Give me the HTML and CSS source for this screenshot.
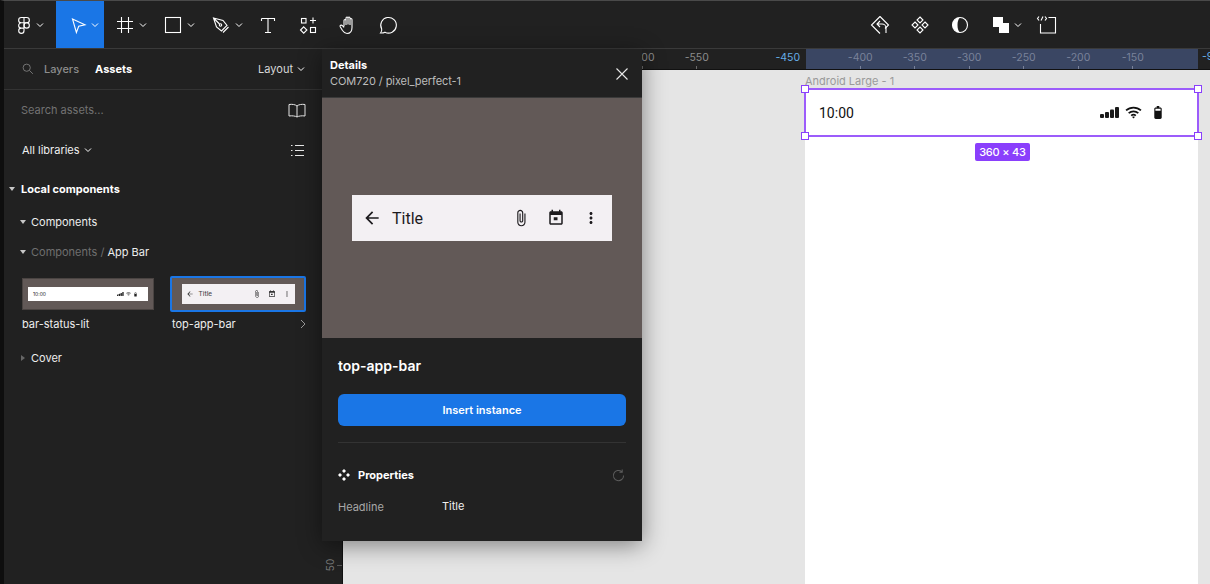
FILE: index.html
```html
<!DOCTYPE html>
<html lang="en">
<head>
<meta charset="utf-8">
<title>Figma assets</title>
<link rel="stylesheet" href="styles.css">
</head>
<body>
<svg class="defs" width="0" height="0" aria-hidden="true">
  <symbol id="i-back" viewBox="0 0 24 24"><path d="M20 11H7.83l5.59-5.59L12 4l-8 8 8 8 1.41-1.41L7.83 13H20v-2z"/></symbol>
  <symbol id="i-clip" viewBox="0 0 24 24"><path d="M16.5 6v11.5c0 2.21-1.79 4-4 4s-4-1.79-4-4V5c0-1.38 1.12-2.5 2.5-2.5s2.5 1.12 2.5 2.5v10.5c0 .55-.45 1-1 1s-1-.45-1-1V6H10v9.5c0 1.38 1.12 2.5 2.5 2.5s2.5-1.12 2.5-2.5V5c0-2.21-1.79-4-4-4S7 2.79 7 5v12.5c0 3.04 2.46 5.5 5.5 5.5s5.5-2.46 5.5-5.5V6h-1.5z"/></symbol>
  <symbol id="i-cal" viewBox="0 0 24 24"><path d="M19 3h-1V1h-2v2H8V1H6v2H5c-1.11 0-2 .9-2 2v14c0 1.1.89 2 2 2h14c1.1 0 2-.9 2-2V5c0-1.100-.9-2-2-2zm0 16H5V8h14v11zM9 11h5v4H9z"/></symbol>
  <symbol id="i-more" viewBox="0 0 24 24"><path d="M12 8c1.1 0 2-.9 2-2s-.9-2-2-2-2 .9-2 2 .9 2 2 2zm0 2c-1.1 0-2 .9-2 2s.9 2 2 2 2-.9 2-2-.9-2-2-2zm0 6c-1.1 0-2 .9-2 2s.9 2 2 2 2-.9 2-2-.9-2-2-2z"/></symbol>
  <symbol id="i-signal" viewBox="0 0 20 11"><rect x="0" y="7" width="4" height="4" rx="1"/><rect x="5" y="5" width="4" height="6" rx="1"/><rect x="10" y="2.500" width="4" height="8.500" rx="1"/><rect x="15" y="0" width="4" height="11" rx="1"/></symbol>
  <symbol id="i-wifi" viewBox="0 0 18 14"><path class="wifi" d="M1 4.800C5.500 .6 12.500 .6 17 4.800M3.800 7.700c3-2.700 7.400-2.700 10.400 0M6.500 10.300c1.500-1.200 3.500-1.200 5 0"/><path d="M7.500 11.800 9 13.500l1.500-1.700c-.9-.7-2.100-.7-3 0z"/></symbol>
  <symbol id="i-batt" viewBox="0 0 10 14"><path d="M7.500 1.500H6.400V0H3.600v1.500H2.500C1.700 1.500 1 2.200 1 3v9.500c0 .8.700 1.500 1.500 1.500h5c.8 0 1.500-.7 1.500-1.500V3c0-.8-.7-1.500-1.500-1.500zM2.200 3h5.600v2H2.200z" fill-rule="evenodd"/></symbol>
  <symbol id="i-chev" viewBox="0 0 8 6"><path class="chev" d="M1 1.500 4 4.500 7 1.500"/></symbol>
</svg>

<div class="app">
  <header class="toolbar">
    <div class="tool tool-logo">
      <svg class="ic" viewBox="0 0 24 24"><path d="M12 4.500H9.300a2.650 2.650 0 0 0 0 5.300H12zM12 4.500h2.700a2.650 2.650 0 0 1 0 5.300H12zM12 9.800H9.300a2.650 2.650 0 0 0 0 5.300H12zM9.300 15.100A2.650 2.650 0 1 0 12 17.750v-2.650z"/><circle cx="14.700" cy="12.450" r="2.650"/></svg>
      <svg class="chev-ic"><use href="#i-chev"/></svg>
    </div>
    <div class="tool tool-chev tool-active">
      <svg class="ic" viewBox="0 0 24 24"><path d="M7.500 6 20 11.800l-6.300 1.500-2.300 6.200z"/></svg>
      <svg class="chev-ic"><use href="#i-chev"/></svg>
    </div>
    <div class="tool tool-chev">
      <svg class="ic" viewBox="0 0 24 24"><path d="M8.500 4v16M15.500 4v16M4 8.500h16M4 15.500h16"/></svg>
      <svg class="chev-ic"><use href="#i-chev"/></svg>
    </div>
    <div class="tool tool-chev">
      <svg class="ic" viewBox="0 0 24 24"><rect x="4.500" y="4.500" width="15" height="15"/></svg>
      <svg class="chev-ic"><use href="#i-chev"/></svg>
    </div>
    <div class="tool tool-chev">
      <svg class="ic" viewBox="0 0 24 24"><path d="M4.500 5 14 7.500l4 5-5.500 5.500-5-4zM4.500 5l6 6M14 19.500l5.500-5.500"/><circle cx="11.500" cy="12" r="1.200"/></svg>
      <svg class="chev-ic"><use href="#i-chev"/></svg>
    </div>
    <div class="tool">
      <svg class="ic" viewBox="0 0 24 24"><path d="M5.500 5.500h13v2.500M5.500 5.500V8M12 5.500v14M9 19.500h6"/></svg>
    </div>
    <div class="tool">
      <svg class="ic" viewBox="0 0 24 24"><rect x="5.500" y="5.500" width="4.500" height="4.500"/><path d="M17 4.500v6M14 7.500h6M7.700 13.800l3.200 3.200-3.200 3.200-3.200-3.200z"/><rect x="14.500" y="14.500" width="5" height="5"/></svg>
    </div>
    <div class="tool">
      <svg class="ic" viewBox="0 0 24 24"><path d="M8 13.500V7.500a1 1 0 0 1 2 0V12M10 11.500V5a1 1 0 0 1 2 0v6.500M12 11.500V5a1 1 0 0 1 2 0v7M14 11.500V6.500a1 1 0 0 1 2 0v8c0 3.700-2 6-5 6-2.500 0-3.500-1.500-4.500-3l-2.300-3.700c-.7-1.200 1-2.300 2-1.300L8 14.500"/></svg>
    </div>
    <div class="tool">
      <svg class="ic" viewBox="0 0 24 24"><path d="M4.500 20c1-1.200 1.400-2.500 1.200-4A7.800 7.800 0 1 1 9 19.200c-1.500.8-2.900 1-4.500.8z"/></svg>
    </div>
    <div class="toolbar-right">
      <div class="tool">
        <svg class="ic" viewBox="0 0 24 24"><path d="M12 3.500 20.500 12l-3.500 3.500M12 3.500 3.500 12l8.500 8.500"/><path d="M12 8l-3 3 3 3M9 11h5a4 4 0 0 1 4 4v5"/></svg>
      </div>
      <div class="tool">
        <svg class="ic" viewBox="0 0 24 24"><path d="M12 4l3 3-3 3-3-3zM7 9l3 3-3 3-3-3zM17 9l3 3-3 3-3-3zM12 14l3 3-3 3-3-3z"/></svg>
      </div>
      <div class="tool">
        <svg class="ic" viewBox="0 0 24 24"><circle cx="12" cy="12" r="7.500"/><path class="solid" d="M12 4.500a7.500 7.500 0 0 0 0 15c-2-2-2.500-4.500-2.500-7.500S10 6.500 12 4.500z"/></svg>
      </div>
      <div class="tool tool-bool">
        <svg class="ic solid" viewBox="0 0 24 24"><path d="M4 4h10v6h6v10H10v-6H4z"/></svg>
        <svg class="chev-ic"><use href="#i-chev"/></svg>
      </div>
      <div class="tool tool-code">
        <svg class="ic" viewBox="0 0 24 24"><path d="M13.500 4.500h7v15.500H5.500v-9M4 3.500 2.500 5.500 4 7.500M10 3.500l1.500 2-1.500 2M6 7.500l2-4"/></svg>
      </div>
    </div>
  </header>

  <main class="workspace">
    <aside class="sidebar">
      <div class="tabs">
        <svg class="ic-search" viewBox="0 0 14 14"><circle cx="5.500" cy="5.500" r="4.200"/><path d="m8.700 8.700 4 4"/></svg>
        <span class="tab">Layers</span>
        <span class="tab tab-on">Assets</span>
        <span class="tab-layout">Layout</span>
        <svg class="chev-ic chev-dim"><use href="#i-chev"/></svg>
      </div>
      <div class="search">
        <span class="search-text">Search assets...</span>
        <svg class="ic-book" viewBox="0 0 18 15"><path d="M9 3C7.500 1.500 4 1 1 1.500V13c3-.5 6.500 0 8 1 1.500-1 5-1.500 8-1V1.500C14 1 10.500 1.500 9 3zM9 3v11"/></svg>
      </div>
      <div class="libs">
        <span>All libraries</span>
        <svg class="chev-ic chev-dim"><use href="#i-chev"/></svg>
        <svg class="ic-list" viewBox="0 0 13 13"><path d="M0 1.500h1.500M4 1.500h9M0 6.500h1.500M4 6.500h9M0 11.500h1.500M4 11.500h9"/></svg>
      </div>
      <div class="row row-top"><i class="tri"></i><strong>Local components</strong></div>
      <div class="row row-sub"><i class="tri"></i><span>Components</span></div>
      <div class="row row-path"><i class="tri"></i><span class="dim">Components /</span><span>&nbsp;App Bar</span></div>
      <div class="thumbs">
        <figure class="thumb">
          <div class="thumb-box">
            <div class="mini mini-status">
              <span>10:00</span>
              <svg class="mini-sig"><use href="#i-signal"/></svg>
              <svg class="mini-wifi"><use href="#i-wifi"/></svg>
              <svg class="mini-bat"><use href="#i-batt"/></svg>
            </div>
          </div>
          <figcaption>bar-status-lit</figcaption>
        </figure>
        <figure class="thumb thumb-sel">
          <div class="thumb-box">
            <div class="mini mini-app">
              <svg class="mini-ic"><use href="#i-back"/></svg>
              <span class="mini-title">Title</span>
              <svg class="mini-ic"><use href="#i-clip"/></svg>
              <svg class="mini-ic"><use href="#i-cal"/></svg>
              <svg class="mini-ic"><use href="#i-more"/></svg>
            </div>
          </div>
          <figcaption>top-app-bar<svg class="cap-arrow" viewBox="0 0 6 10"><path d="M1 1l4 4-4 4"/></svg></figcaption>
        </figure>
      </div>
      <div class="row row-cover"><i class="tri tri-right"></i><span>Cover</span></div>
    </aside>

    <div class="vruler"><span class="vlabel">50</span><i class="vtick"></i></div>

    <section class="stage">
      <div class="ruler">
        <div class="rcell"><span>-600</span></div>
        <div class="rcell"><span>-550</span></div>
        <div class="rcell rcell-sel"><span>-450</span></div>
        <div class="rcell"><span>-400</span></div>
        <div class="rcell"><span>-350</span></div>
        <div class="rcell"><span>-300</span></div>
        <div class="rcell"><span>-250</span></div>
        <div class="rcell"><span>-200</span></div>
        <div class="rcell"><span>-150</span></div>
        <span class="rband"></span>
        <span class="rend">-90</span>
      </div>
      <div class="canvas">
        <div class="frame-name">Android Large - 1</div>
        <div class="frame">
          <div class="status">
            <span class="status-time">10:00</span>
            <svg class="st-sig"><use href="#i-signal"/></svg>
            <svg class="st-wifi"><use href="#i-wifi"/></svg>
            <svg class="st-bat"><use href="#i-batt"/></svg>
          </div>
          <div class="selection">
            <i class="h h-tl"></i><i class="h h-tr"></i><i class="h h-bl"></i><i class="h h-br"></i>
            <span class="size">360 × 43</span>
          </div>
        </div>
      </div>
    </section>

    <div class="details">
      <div class="d-head">
        <div>
          <div class="d-title">Details</div>
          <div class="d-path">COM720 / pixel_perfect-1</div>
        </div>
        <svg class="d-close" viewBox="0 0 12 12"><path d="M.5.500l11 11M11.500.500l-11 11"/></svg>
      </div>
      <div class="d-preview">
        <div class="appbar">
          <svg class="ab-ic ab-back"><use href="#i-back"/></svg>
          <span class="ab-title">Title</span>
          <svg class="ab-ic"><use href="#i-clip"/></svg>
          <svg class="ab-ic"><use href="#i-cal"/></svg>
          <svg class="ab-ic"><use href="#i-more"/></svg>
        </div>
      </div>
      <div class="d-body">
        <div class="d-name">top-app-bar</div>
        <button class="d-btn" type="button">Insert instance</button>
        <hr class="d-rule">
        <div class="d-props">
          <svg class="ic-props" viewBox="0 0 12 12"><path d="M6 0l2 2-2 2-2-2zM2 4l2 2-2 2-2-2zM10 4l2 2-2 2-2-2zM6 8l2 2-2 2-2-2z"/></svg>
          <strong>Properties</strong>
          <svg class="ic-reset" viewBox="0 0 14 14"><path d="M12.500 7A5.500 5.500 0 1 1 10.500 2.800M11 .500v3H8"/></svg>
        </div>
        <div class="d-field"><span class="d-key">Headline</span><span class="d-val">Title</span></div>
      </div>
    </div>
  </main>
</div>
</body>
</html>
```

FILE: styles.css
```css
* { box-sizing: border-box; }
html, body { margin: 0; height: 100%; overflow: hidden; }
body { font-family: Inter, "Liberation Sans", sans-serif; font-size: 11px; color: #fff; background: #e5e5e5; }
.defs { position: absolute; }
svg { display: block; flex: none; }

.app { width: 1210px; height: 584px; display: flex; flex-direction: column; overflow: hidden; background: #212121; border-top: 1px solid #4a4a4a; border-left: 4px solid #0e0e0e; }

/* Toolbar */
.toolbar { height: 48px; flex: none; display: flex; align-items: stretch; background: #212121; border-bottom: 1px solid #3a3a3a; }
.tool { width: 40px; display: flex; align-items: center; justify-content: center; }
.tool-logo { width: 52px; justify-content: flex-start; padding-left: 8px; gap: 0; }
.tool-chev { width: 48px; justify-content: flex-start; padding-left: 9px; gap: 2px; }
.tool-active { background: #1a76e6; }
.toolbar-right { display: flex; margin-left: 452px; }
.tool-bool { width: 50px; justify-content: flex-start; padding-left: 9px; gap: 1px; }
.tool-code { width: 34px; }
.ic { width: 24px; height: 24px; fill: none; stroke: #fff; stroke-width: 1.1; }
.ic .solid, .ic.solid { fill: #fff; stroke: none; }
.chev-ic { width: 8px; height: 6px; }
.chev { fill: none; stroke: #fff; stroke-width: 1; }
.chev-dim .chev { stroke: #8a8a8a; }

/* Workspace */
.workspace { flex: 1; min-height: 0; display: flex; position: relative; }

/* Sidebar */
.sidebar { width: 318px; flex: none; background: #212121; }
.tabs { height: 41px; display: flex; align-items: center; padding: 0 17px 1px 18px; border-bottom: 1px solid #333; }
.ic-search { width: 12px; height: 12px; fill: none; stroke: #777; stroke-width: 1.1; margin-right: 10px; }
.tab { color: #8d8d8d; font-weight: 500; margin-right: 16px; }
.tab-on { color: #fff; font-weight: 700; }
.tab-layout { margin-left: auto; margin-right: 4px; color: #d8d8d8; }
.search { height: 40px; display: flex; align-items: center; justify-content: space-between; padding: 0 16px 1px 17px; }
.search-text { color: #727272; }
.ic-book { width: 18px; height: 15px; fill: none; stroke: #e8e8e8; stroke-width: 1; margin-top: 1px; }
.libs { height: 40px; display: flex; align-items: center; padding: 0 18px 0 18px; color: #f0f0f0; gap: 4px; }
.ic-list { width: 13px; height: 13px; margin-left: auto; fill: none; stroke: #e8e8e8; stroke-width: 1; }
.row { display: flex; align-items: center; color: #ededed; }
.row-top { height: 38px; padding-left: 5px; }
.row-top strong { font-weight: 700; color: #fff; margin-left: 6px; }
.row-sub { height: 28px; padding-left: 16px; }
.row-path { height: 32px; padding-left: 16px; }
.row-sub span:first-of-type, .row-cover span { margin-left: 5px; }
.row-path .dim { color: #6f6f6f; margin-left: 5px; }
.tri { width: 0; height: 0; flex: none; border-left: 3px solid transparent; border-right: 3px solid transparent; border-top: 4px solid #c8c8c8; }
.tri-right { border-top: 3px solid transparent; border-bottom: 3px solid transparent; border-left: 4px solid #666; border-right: 0; margin-right: 1px; }

.thumbs { display: flex; padding: 8px 16px 0 18px; gap: 16px; }
.thumb { margin: 0; width: 132px; }
.thumb-box { height: 32px; margin-top: 2px; background: #625957; border: 1px solid #4a4442; display: flex; align-items: center; justify-content: center; }
.thumb-sel { width: 136px; }
.thumb-sel .thumb-box { height: 36px; margin-top: 0; border: 2px solid #1a76e6; border-radius: 2px; }
.thumb figcaption { margin: 7px 0 0; line-height: 14px; color: #eee; position: relative; }
.thumb-sel figcaption { margin-top: 5px; margin-left: 2px; }
.cap-arrow { position: absolute; right: 0; top: 2px; width: 6px; height: 10px; fill: none; stroke: #9a9a9a; stroke-width: 1; }
.mini { color: #222; display: flex; align-items: center; }
.mini-status { width: 120px; height: 14px; background: #fff; padding: 0 11px 0 5px; font-size: 5px; }
.mini-status span { margin-right: auto; }
.mini-sig { width: 7px; height: 4px; fill: #222; }
.mini-wifi { width: 5px; height: 4px; margin: 0 3px 0 2px; fill: #222; }
.mini-bat { width: 3px; height: 5px; fill: #222; }
.mini-app { width: 113px; height: 20px; background: #f3f0f3; padding: 0 4px; font-family: Roboto, sans-serif; font-size: 7px; color: #444; }
.mini-ic { width: 8px; height: 8px; fill: #333; margin-left: 7px; }
.mini-ic:first-child { margin-left: 0; }
.mini-title { margin: 0 auto 0 5px; }
.wifi { fill: none; stroke: #111; stroke-width: 1.900; }
.row-cover { height: 14px; margin-top: 20px; padding-left: 17px; }

/* Left ruler */
.vruler { width: 21px; flex: none; background: #212121; border-right: 1px solid #111; position: relative; }
.vlabel { position: absolute; left: 2px; top: 510px; color: #777; font-size: 10px; transform: rotate(-90deg); }
.vtick { position: absolute; right: 0; top: 516px; width: 5px; height: 1px; background: #555; }

/* Stage */
.stage { flex: 1; min-width: 0; display: flex; flex-direction: column; }
.ruler { height: 21px; flex: none; display: flex; background: #212121; border-bottom: 1px solid #111; padding-left: 272px; position: relative; overflow: hidden; }
.rcell { width: 54.500px; flex: none; display: flex; flex-direction: column; align-items: center; justify-content: flex-end; color: #8c8c8c; font-size: 10.500px; position: relative; z-index: 1; }
.rcell span { margin-bottom: 1px; line-height: 14px; }
.rcell::after { content: ""; width: 1px; height: 3px; background: #6a6a6a; }
.rcell:nth-child(2) { margin-right: 54.500px; }
.rcell-sel { color: #66aee8; }
.rcell-sel span { position: relative; left: -18px; }
.rcell-sel::after { visibility: hidden; }
.rcell:nth-child(n+4) { color: #79829a; }
.rcell:nth-child(n+4)::after { background: #79829a; }
.rband { position: absolute; left: 463px; top: 0; bottom: 0; width: 392px; background: #3a4663; }
.rend { position: absolute; left: 859px; top: 1px; line-height: 14px; font-size: 10.500px; color: #66aee8; z-index: 1; }

.canvas { flex: 1; position: relative; background: #e5e5e5; overflow: hidden; }
.frame-name { position: absolute; left: 462px; top: 4px; color: #9a9a9a; line-height: 14px; }
.frame { position: absolute; left: 462px; top: 19px; width: 393px; height: 520px; background: #fff; }
.status { height: 47px; display: flex; align-items: center; padding: 0 35px 0 14px; color: #111; font-family: Roboto, sans-serif; font-size: 14px; }
.status-time { margin-right: auto; }
.st-sig { width: 20px; height: 11px; fill: #1a1a1a; position: relative; left: 1px; }
.st-wifi { width: 17px; height: 13px; margin: 0 11px 0 6px; fill: #111; }
.st-bat { width: 10px; height: 13px; fill: #111; }
.selection { position: absolute; left: -1px; top: -1px; width: 395px; height: 49px; border: 2px solid #9c5cfb; }
.h { position: absolute; width: 8px; height: 8px; background: #fff; border: 1px solid #8a3ffc; }
.h-tl { left: -5px; top: -5px; }
.h-tr { right: -5px; top: -5px; }
.h-bl { left: -5px; bottom: -5px; }
.h-br { right: -5px; bottom: -5px; }
.size { position: absolute; left: 169px; top: 53px; height: 18px; width: 55px; background: #8a3ffc; border-radius: 2px; color: #fff; font-size: 11px; font-weight: 500; letter-spacing: -.2px; display: flex; align-items: center; justify-content: center; }

/* Details popover */
.details { position: absolute; left: 318px; top: 0; width: 320px; height: 492px; background: #212121; box-shadow: 0 4px 22px rgba(0,0,0,.45); display: flex; flex-direction: column; z-index: 5; }
.d-head { height: 49px; flex: none; display: flex; align-items: center; justify-content: space-between; padding: 2px 14px 0 8px; border-bottom: 1px solid #3a3a3a; }
.d-title { font-weight: 700; line-height: 15px; }
.d-path { color: #bdbdbd; line-height: 17px; letter-spacing: -.08px; }
.d-close { width: 12px; height: 12px; fill: none; stroke: #e8e8e8; stroke-width: 1.100; }
.d-preview { height: 240px; flex: none; background: #625957; display: flex; align-items: center; justify-content: center; }
.appbar { width: 260px; height: 46px; background: #f3f0f3; display: flex; align-items: center; padding: 0 12px 0 10px; color: #1d1b1e; font-family: Roboto, sans-serif; font-size: 16px; }
.ab-ic { width: 18px; height: 18px; fill: #1d1b1e; margin-left: 17px; }
.ab-back { margin-left: 0; width: 20px; height: 20px; }
.ab-title { margin: 0 auto 0 10px; }
.d-body { flex: 1; padding: 0 16px; }
.d-name { margin-top: 19px; font-size: 14px; font-weight: 600; line-height: 17px; }
.d-btn { display: block; width: 100%; height: 32px; margin-top: 20px; border: 0; border-radius: 6px; background: #1a76e6; color: #fff; font: 600 11px Inter, sans-serif; }
.d-rule { margin: 16px 0 0; border: 0; border-top: 1px solid #333; }
.d-props { display: flex; align-items: center; margin-top: 25px; height: 14px; }
.d-props strong { font-weight: 700; margin-left: 8px; }
.ic-props { width: 12px; height: 12px; fill: #fff; }
.ic-reset { width: 13px; height: 13px; margin-left: auto; margin-right: 1px; fill: none; stroke: #5c5c5c; stroke-width: 1.100; }
.d-field { display: flex; margin-top: 17px; align-items: baseline; }
.d-key { width: 104px; color: #a8a8a8; position: relative; top: 1px; }
.d-val { color: #f0f0f0; }
```
